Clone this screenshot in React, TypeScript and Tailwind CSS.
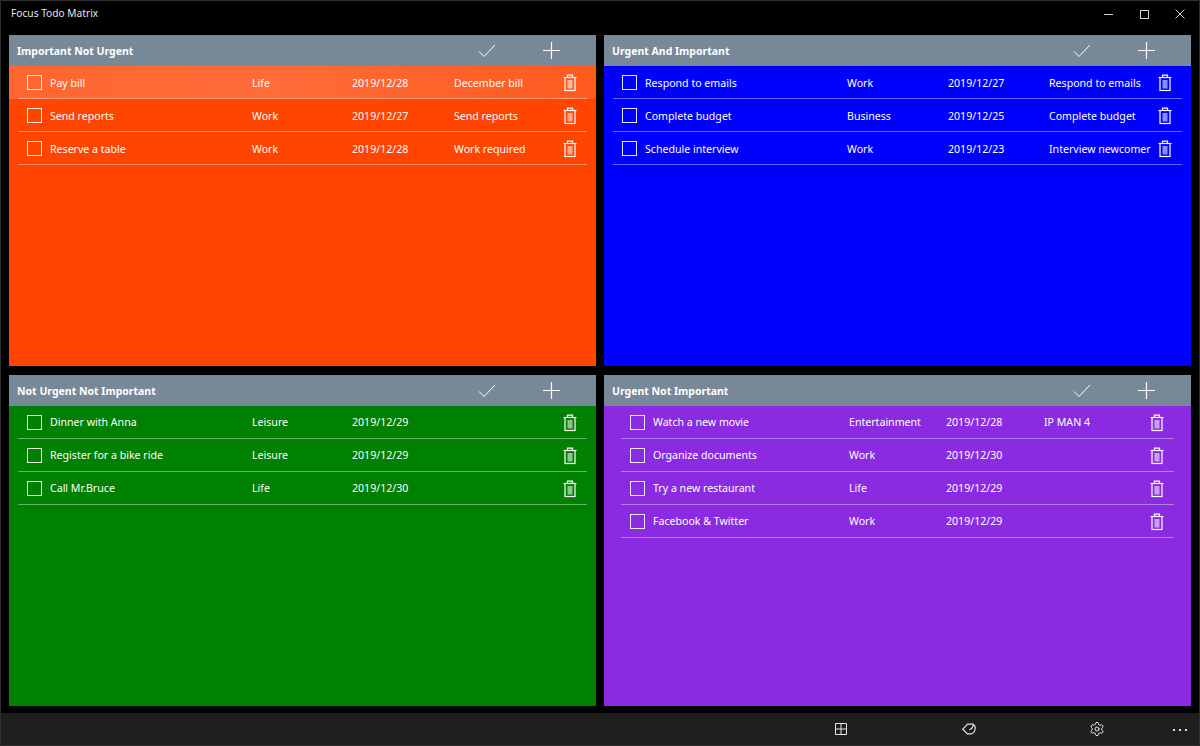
import { Settings } from "lucide-react";

type Task = { title: string; category: string; date: string; note?: string };

type Quadrant = {
  title: string;
  bg: string;
  inset: string;
  columns: string;
  textOffset: string;
  tasks: Task[];
  hovered?: boolean;
};

const quadrants: Quadrant[] = [
  {
    title: "Important Not Urgent",
    bg: "bg-[#ff4500]",
    inset: "px-[9px]",
    columns: "grid-cols-[32px_202px_100px_102px_102px_28px]",
    textOffset: "pt-[2px]",
    hovered: true,
    tasks: [
      { title: "Pay bill", category: "Life", date: "2019/12/28", note: "December bill" },
      { title: "Send reports", category: "Work", date: "2019/12/27", note: "Send reports" },
      { title: "Reserve a table", category: "Work", date: "2019/12/28", note: "Work required" },
    ],
  },
  {
    title: "Urgent And Important",
    bg: "bg-[#0000ff]",
    inset: "px-[9px]",
    columns: "grid-cols-[32px_202px_101px_101px_102px_28px]",
    textOffset: "pt-[2px]",
    tasks: [
      { title: "Respond to emails", category: "Work", date: "2019/12/27", note: "Respond to emails" },
      { title: "Complete budget", category: "Business", date: "2019/12/25", note: "Complete budget" },
      { title: "Schedule interview", category: "Work", date: "2019/12/23", note: "Interview newcomer" },
    ],
  },
  {
    title: "Not Urgent Not Important",
    bg: "bg-[#008000]",
    inset: "px-[9px]",
    columns: "grid-cols-[32px_202px_100px_102px_102px_28px]",
    textOffset: "",
    tasks: [
      { title: "Dinner with Anna", category: "Leisure", date: "2019/12/29" },
      { title: "Register for a bike ride", category: "Leisure", date: "2019/12/29" },
      { title: "Call Mr.Bruce", category: "Life", date: "2019/12/30" },
    ],
  },
  {
    title: "Urgent Not Important",
    bg: "bg-[#8a2be2]",
    inset: "px-[17px]",
    columns: "grid-cols-[32px_196px_97px_98px_99px_28px]",
    textOffset: "",
    tasks: [
      { title: "Watch a new movie", category: "Entertainment", date: "2019/12/28", note: "IP MAN 4" },
      { title: "Organize documents", category: "Work", date: "2019/12/30" },
      { title: "Try a new restaurant", category: "Life", date: "2019/12/29" },
      { title: "Facebook & Twitter", category: "Work", date: "2019/12/29" },
    ],
  },
];

function TrashIcon() {
  return (
    <svg width="14" height="18" viewBox="0 0 14 18" fill="none" stroke="white" strokeWidth="1.2">
      <path d="M0.5 3.5H13.5M4.5 3.5V1.2H9.5V3.5" />
      <rect x="2" y="3.5" width="10" height="13" />
      <rect x="4.5" y="6" width="5" height="8.5" fill="white" fillOpacity="0.55" stroke="none" />
    </svg>
  );
}

function CheckIcon() {
  return (
    <svg width="18" height="14" viewBox="0 0 18 14" fill="none" stroke="white">
      <path d="M1 7.5L6 12.5L17 1" />
    </svg>
  );
}

function PlusIcon() {
  return (
    <svg width="17" height="17" viewBox="0 0 17 17" fill="none" stroke="white" strokeWidth="1.2">
      <path d="M8.5 0V17M0 8.5H17" />
    </svg>
  );
}

function GridIcon() {
  return (
    <svg width="12" height="12" viewBox="0 0 12 12" fill="none" stroke="#e4e4e4">
      <path d="M0.5 0.5H11.5V11.5H0.5ZM6 0.5V11.5M0.5 6H11.5" />
    </svg>
  );
}

function EraserIcon() {
  return (
    <svg width="14" height="12" viewBox="0 0 14 12" fill="none" stroke="#e4e4e4" strokeWidth="1.2">
      <path d="M0.8 6.2L5.6 1.2H11.2C12.6 2 13.4 3.4 13.2 5.2C13 7.6 11.6 10.2 9.2 10.8H5.4Z" />
      <path d="M11.2 1.2C11.8 3.4 9.4 6 7.4 6.8" />
    </svg>
  );
}

function TaskRow({
  task,
  columns,
  inset,
  textOffset,
  hovered,
}: {
  task: Task;
  columns: string;
  inset: string;
  textOffset: string;
  hovered: boolean;
}) {
  return (
    <div
      className={`h-[33px] ${inset} ${
        hovered ? "bg-[linear-gradient(90deg,#ff6630_0%,#ff6c38_45%,#ff5a1e_100%)]" : ""
      }`}
    >
      <div className={`grid h-full items-center whitespace-nowrap border-b border-white/40 pt-[1px] ${columns}`}>
        <span className="ml-[9px] h-[15px] w-[15px] border-[1.5px] border-white/90" />
        <span className={textOffset}>{task.title}</span>
        <span className={textOffset}>{task.category}</span>
        <span className={textOffset}>{task.date}</span>
        <span className={textOffset}>{task.note}</span>
        <span className="flex justify-center">
          <TrashIcon />
        </span>
      </div>
    </div>
  );
}

function QuadrantPanel({ quadrant }: { quadrant: Quadrant }) {
  const { columns, inset, textOffset, hovered } = quadrant;
  return (
    <section className={`flex h-[331px] flex-col text-[10.6px] text-white ${quadrant.bg}`}>
      <header className="flex h-[31px] shrink-0 items-center bg-[#778899] pl-[8px] pr-[13px]">
        <h2 className="flex-1 pt-[3px] text-[10.5px] font-bold">{quadrant.title}</h2>
        <button type="button" className="flex h-full w-[64px] items-center justify-center">
          <CheckIcon />
        </button>
        <button type="button" className="flex h-full w-[64px] items-center justify-center">
          <PlusIcon />
        </button>
      </header>
      {quadrant.tasks.map((task, index) => (
        <TaskRow
          key={task.title}
          task={task}
          columns={columns}
          inset={inset}
          textOffset={textOffset}
          hovered={!!hovered && index === 0}
        />
      ))}
    </section>
  );
}

export default function App() {
  return (
    <div className="flex h-[746px] w-[1200px] flex-col overflow-hidden border border-[#2e2e2e] bg-black font-['Noto_Sans',sans-serif]">
      <div className="flex h-[34px] shrink-0 items-center justify-between">
        <span className="pb-[8px] pl-[10px] text-[10.2px] text-[#e6e6e6]">Focus Todo Matrix</span>
        <div className="flex items-center pb-[8px] pr-[1px]">
          <span className="flex w-[36px] justify-center">
            <span className="h-px w-[9px] bg-[#cfcfcf]" />
          </span>
          <span className="flex w-[36px] justify-center">
            <span className="h-[9px] w-[9px] border border-[#cfcfcf]" />
          </span>
          <svg className="mx-[13px]" width="10" height="10" viewBox="0 0 10 10" stroke="#cfcfcf">
            <path d="M0.5 0.5L9.5 9.5M9.5 0.5L0.5 9.5" />
          </svg>
        </div>
      </div>
      <main className="grid grid-cols-[587px_587px] gap-x-[8px] gap-y-[9px] px-[8px]">
        {quadrants.map((quadrant) => (
          <QuadrantPanel key={quadrant.title} quadrant={quadrant} />
        ))}
      </main>
      <footer className="mt-[7px] flex flex-1 items-center justify-end bg-[#1f1f1f]">
        <span className="flex w-[128px] justify-center">
          <GridIcon />
        </span>
        <span className="flex w-[128px] justify-center">
          <EraserIcon />
        </span>
        <span className="flex w-[128px] justify-center">
          <Settings size={16} strokeWidth={1.5} color="#e4e4e4" />
        </span>
        <span className="flex w-[38px] justify-center gap-[4px] pt-[2px]">
          <span className="h-[2px] w-[2px] bg-[#e4e4e4]" />
          <span className="h-[2px] w-[2px] bg-[#e4e4e4]" />
          <span className="h-[2px] w-[2px] bg-[#e4e4e4]" />
        </span>
      </footer>
    </div>
  );
}
